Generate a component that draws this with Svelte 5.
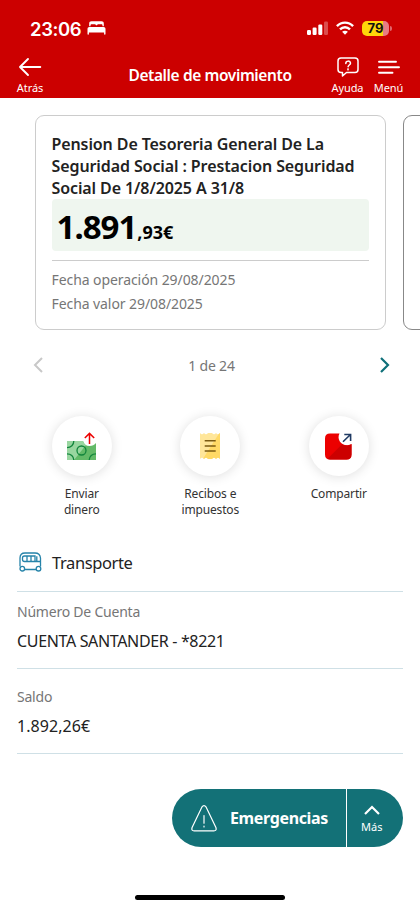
<script lang="ts">
	let details = [
		{ label: 'Número De Cuenta', value: 'CUENTA SANTANDER - *8221' },
		{ label: 'Saldo', value: '1.892,26€' }
	];
</script>

<div class="screen">
	<header>
		<div class="status">
			<span class="time">23:06</span>
			<svg class="bed" width="19" height="14" viewBox="0 0 19 14" fill="#fff">
				<path d="M2.200 5.200V2.600C2.200 1 3 .3 4.500.3h10C16 .3 16.800 1 16.800 2.600v2.600h-1.300v-.7c0-.8-.4-1.200-1.200-1.200h-3c-.7 0-1.100.3-1.300.9h-1c-.2-.6-.6-.9-1.300-.9h-3c-.8 0-1.200.4-1.200 1.200v.7z" />
				<path d="M2.500 6h14c1.300 0 2 .8 2 2v5c0 .5-.3.7-.7.700s-.7-.2-.7-.7v-1.500H1.900V13c0 .5-.3.700-.7.700s-.7-.2-.7-.7V8c0-1.200.7-2 2-2z" />
			</svg>
			<div class="indicators">
				<svg width="21" height="14" viewBox="0 0 21 14" fill="#fff">
					<rect x="0" y="9" width="4" height="5" rx="1.200" />
					<rect x="5.600" y="6.500" width="4" height="7.500" rx="1.200" />
					<rect x="11.300" y="3.500" width="4" height="10.500" rx="1.200" />
					<rect x="17" y="0.500" width="4" height="13.500" rx="1.200" opacity=".3" />
				</svg>
				<svg width="18" height="14" viewBox="0 0 18 14" fill="none" stroke="#fff" stroke-width="2.400">
					<path d="M.9 5.200C5.500.4 12.500.4 17.100 5.200M4 8.400c2.900-2.900 7.100-2.900 10 0" />
					<path d="M9 13.800 6.100 10.800c1.600-1.500 4.200-1.500 5.800 0z" fill="#fff" stroke="none" />
				</svg>
				<div class="battery"><span>79</span></div>
				<i class="cap"></i>
			</div>
		</div>
		<nav>
			<div class="nav-item back">
				<svg width="24" height="20" viewBox="0 0 24 20" fill="none" stroke="#fff" stroke-width="1.900" stroke-linecap="round" stroke-linejoin="round">
					<path d="M22.300 10H2M10 2 2 10l8 8" />
				</svg>
				<span>Atrás</span>
			</div>
			<h1>Detalle de movimiento</h1>
			<div class="nav-item help">
				<svg width="22" height="20" viewBox="0 0 22 20" fill="none" stroke="#fff" stroke-width="1.500" stroke-linejoin="round" stroke-linecap="round">
					<path d="M4 1h14q3 0 3 3v8.500q0 3-3 3H9.500L5.500 19v-3.500H4q-3 0-3-3V4q0-3 3-3z" />
					<path d="M8.800 6.400c0-3 4.700-3 4.700-.2 0 1.800-2.400 1.800-2.400 3.600" />
					<circle cx="11" cy="12.400" r=".3" />
				</svg>
				<span>Ayuda</span>
			</div>
			<div class="nav-item menu">
				<svg width="22" height="20" viewBox="0 0 22 20" fill="none" stroke="#fff" stroke-width="1.900" stroke-linecap="round">
					<path d="M1 4.800h17M1 10.200h20M1 15.700h13.500" />
				</svg>
				<span>Menú</span>
			</div>
		</nav>
	</header>

	<div class="carousel">
		<section class="card">
			<h2>
				Pension De Tesoreria General De La<br />
				Seguridad Social : Prestacion Seguridad<br />
				Social De 1/8/2025 A 31/8
			</h2>
			<div class="amount"><b>1.891</b><small>,93€</small></div>
			<div class="dates">
				<p>Fecha operación 29/08/2025</p>
				<p>Fecha valor 29/08/2025</p>
			</div>
		</section>
		<section class="card next"></section>
	</div>

	<div class="pager">
		<svg width="10" height="16" viewBox="0 0 10 16" fill="none" stroke="#c8c8c8" stroke-width="2"><path d="M9 1 2 8l7 7" /></svg>
		<span>1 de 24</span>
		<svg width="10" height="16" viewBox="0 0 10 16" fill="none" stroke="#0f7079" stroke-width="2.200"><path d="m1 1 7 7-7 7" /></svg>
	</div>

	<div class="actions">
		<div class="action">
			<div class="circle">
				<svg width="30" height="28" viewBox="0 0 30 28" fill="none">
					<path d="M0 9h16c.8 3 3.200 5 6.500 5 2.800 0 5-.9 6.500-3v17H0z" fill="#63ba68" />
					<path d="M0 9h16c.5 2 1.500 3.300 3 4.100L7 28H0z" fill="#99d6a0" />
					<g stroke="#12853c" stroke-width="1.300">
						<circle cx="14.500" cy="18.500" r="4.500" />
						<path d="M6.800 9c0 3.800-2.800 6.600-6.800 6.600M0 21.800c3.800 0 6.400 2.400 6.800 6.200M29 21.800c-3.800 0-6.400 2.400-6.800 6.200" />
					</g>
					<path d="M22.500 12V1.500M17.800 6l4.700-4.600L27.200 6" stroke="#ec0000" stroke-width="1.500" />
				</svg>
			</div>
			<p>Enviar<br />dinero</p>
		</div>
		<div class="action">
			<div class="circle">
				<svg width="20" height="26" viewBox="0 0 20 26" fill="none">
					<path d="M0 0q2 2.500 4 0 2 2.500 4 0h4q2 2.500 4 0 2 2.500 4 0v26q-2-2.500-4 0-2-2.500-4 0H8q-2-2.500-4 0-2-2.500-4 0z" fill="#ffe69a" />
					<path d="M18.500 1.200 20 0v26q-2-2.500-4 0-2-2.500-4 0H8q-2-2.500-4 0l-.7-.8z" fill="#ffd966" />
					<path d="M4.700 7.800h11M4.700 12.900h11M4.700 18h11" stroke="#7b5b12" stroke-width="1.500" />
				</svg>
			</div>
			<p>Recibos e<br />impuestos</p>
		</div>
		<div class="action">
			<div class="circle">
				<svg width="27" height="27" viewBox="0 0 27 27" fill="none">
					<path d="M5 .5h9.500c-3 5.500 1.500 12 8 11.800 1.600-.2 2.700-.6 4-1.300v10.500q0 5-5 5H5q-5 0-5-5v-16q0-5 5-5z" fill="#ec0000" />
					<path d="M17 11.200c3 1.900 6.400 1.700 9.500-.2v10.500q0 5-5 5H5q-1.500 0-2.500-.7z" fill="#c00" />
					<path d="M18 8.800 25.500 1.500M19.300 1.500h6.300v6.500" stroke="#1f3a63" stroke-width="1.600" />
				</svg>
			</div>
			<p>Compartir</p>
		</div>
	</div>

	<div class="category">
		<svg width="23" height="20" viewBox="0 0 23 20" fill="none" stroke="#2583a9" stroke-width="1.300">
			<path d="M1 14.500V6q0-5 5-5h10q5 0 5.500 5v8.500M5.500 17.500h11.500" />
			<path d="M5.500 4H16v5.500H5.500q-2 0-2-2V6q0-2 2-2zM8 4v5.500M12 4v5.500M16 9.500h5M17.800 4.300v5" />
			<circle cx="3.300" cy="16.700" r="2.300" />
			<circle cx="19.500" cy="16.700" r="2.300" />
		</svg>
		<span>Transporte</span>
	</div>

	{#each details as detail}
		<div class="detail">
			<div class="label">{detail.label}</div>
			<div class="value">{detail.value}</div>
		</div>
	{/each}

	<div class="fab">
		<div class="emergency">
			<svg width="26" height="27" viewBox="0 0 26 27" fill="none" stroke="#fff" stroke-width="1.200" stroke-linecap="round">
				<path d="M10.800 2.200q2.200-3 4.400 0l9.700 20.300q1 3.300-2 3.300H3.100q-3 0-2-3.300z" />
				<path d="M13 10.500v7.700M13 21v1" />
			</svg>
			<span>Emergencias</span>
		</div>
		<div class="more">
			<svg width="16" height="10" viewBox="0 0 16 10" fill="none" stroke="#fff" stroke-width="2.200"><path d="m1 9 7-7 7 7" /></svg>
			<span>Más</span>
		</div>
	</div>

	<div class="home"></div>
</div>

<style>
	:global(body) {
		background: #fff;
	}

	.screen {
		width: 420px;
		height: 909px;
		overflow: hidden;
		display: flex;
		flex-direction: column;
		font-family: 'Noto Sans', sans-serif;
		color: #222;
	}

	h1, h2, p {
		margin: 0;
	}

	svg {
		display: block;
		flex: none;
	}

	header {
		height: 98px;
		flex: none;
		background: #c00;
		color: #fff;
	}

	.status {
		padding: 10px 28px 0 30px;
		box-sizing: border-box;
		height: 46px;
		display: flex;
		align-items: center;
	}

	.time {
		font: 600 18.500px/22px Inter, sans-serif;
		letter-spacing: -0.4px;
		width: 57px;
		padding-top: 1px;
	}

	.indicators {
		margin-left: auto;
		display: flex;
		align-items: center;
	}

	.indicators svg + svg {
		margin: 0 8px;
	}

	.battery {
		width: 27px;
		height: 15px;
		border-radius: 5px;
		background: linear-gradient(90deg, #ffd60a 79%, #e77c84 79%);
		color: #111;
		font: 700 13px/15px Inter, sans-serif;
		text-align: center;
	}

	.cap {
		width: 2px;
		height: 5px;
		margin-left: 1px;
		border-radius: 0 2px 2px 0;
		background: #e0666b;
	}

	nav {
		height: 52px;
		display: grid;
		grid-template-columns: 60px 1fr 41px 41px 11px;
		padding-top: 10px;
		box-sizing: border-box;
	}

	.nav-item {
		display: flex;
		flex-direction: column;
		align-items: center;
		font-size: 11px;
		line-height: 16px;
		letter-spacing: -0.1px;
		gap: 3px;
		margin-top: 1px;
	}

	h1 {
		font-size: 15.500px;
		line-height: 22px;
		font-weight: 600;
		letter-spacing: -0.4px;
		text-align: center;
		padding: 8px 0 0 33px;
		white-space: nowrap;
	}

	.carousel {
		display: flex;
		gap: 17px;
		padding: 17px 0 0 34.500px;
		height: 214px;
		flex: none;
	}

	.card {
		box-sizing: border-box;
		flex: none;
		width: 351px;
		height: 215px;
		border: 1px solid #ccc;
		border-radius: 9px;
		padding: 17px 16px 0;
	}

	.next {
		border-color: #888;
	}

	h2 {
		font-size: 16px;
		line-height: 22px;
		font-weight: 600;
		letter-spacing: -0.1px;
		white-space: nowrap;
	}

	.amount {
		height: 52px;
		border-radius: 4px;
		background: #eff6ef;
		color: #000;
		padding-left: 5px;
		line-height: 56px;
		box-sizing: border-box;
		white-space: nowrap;
		overflow: hidden;
	}

	.amount b {
		font-size: 33px;
		letter-spacing: -1px;
	}

	.amount small {
		font-size: 18px;
		font-weight: 700;
		margin-left: 1px;
	}

	.dates {
		margin-top: 9px;
		padding-top: 7px;
		border-top: 1px solid #ccc;
		color: #767676;
		font-size: 14px;
		line-height: 24px;
		letter-spacing: -0.08px;
	}

	.pager {
		display: flex;
		justify-content: space-between;
		align-items: center;
		padding: 0 30px 0 33px;
		margin-top: 24px;
		height: 24px;
		font-size: 14px;
		letter-spacing: -0.2px;
		color: #767676;
	}

	.actions {
		display: grid;
		grid-template-columns: repeat(3, 128.500px);
		padding-left: 17.500px;
		margin-top: 39px;
		height: 104px;
		flex: none;
	}

	.action {
		display: flex;
		flex-direction: column;
		align-items: center;
		font-size: 12px;
		line-height: 16px;
		letter-spacing: -0.15px;
		text-align: center;
		color: #333;
	}

	.circle {
		width: 60px;
		height: 60px;
		border-radius: 50%;
		display: flex;
		align-items: center;
		justify-content: center;
		box-shadow: 0 1px 12px rgba(0, 0, 0, 0.13);
		margin-bottom: 10px;
	}

	.category {
		display: flex;
		align-items: center;
		margin: 13px 17px 0;
		padding: 0 2px;
		height: 58px;
		border-bottom: 1px solid #cfe0e6;
		font-size: 16.500px;
		letter-spacing: -0.4px;
		gap: 10px;
	}

	.detail {
		margin: 0 17px;
		height: 76px;
		border-bottom: 1px solid #cfe0e6;
	}

	.detail + .detail {
		height: 84px;
	}

	.label {
		font-size: 14px;
		line-height: 20px;
		padding-top: 10px;
		letter-spacing: -0.22px;
		color: #767676;
	}

	.detail + .detail .label {
		padding-top: 18px;
	}

	.value {
		font-size: 16px;
		line-height: 22px;
		margin-top: 8px;
		letter-spacing: -0.34px;
	}

	.detail + .detail .value {
		letter-spacing: 0.05px;
	}

	.fab {
		align-self: flex-end;
		display: flex;
		width: 231.500px;
		height: 58px;
		flex: none;
		margin: 35px 17px 0 0;
		border-radius: 29px;
		background: #137177;
		color: #fff;
		overflow: hidden;
	}

	.emergency {
		width: 175px;
		flex: none;
		border-right: 1px solid #fff;
		display: flex;
		align-items: center;
		padding-left: 19.500px;
		box-sizing: border-box;
		gap: 13px;
		font-size: 16px;
		font-weight: 700;
		letter-spacing: -0.35px;
	}

	.more {
		flex: 1;
		display: flex;
		flex-direction: column;
		align-items: center;
		padding: 16px 6px 0 0;
		font-size: 11px;
		line-height: 16px;
		gap: 4px;
	}

	.home {
		width: 150px;
		height: 5px;
		border-radius: 3px;
		background: #000;
		margin: 48px auto 0;
	}
</style>
